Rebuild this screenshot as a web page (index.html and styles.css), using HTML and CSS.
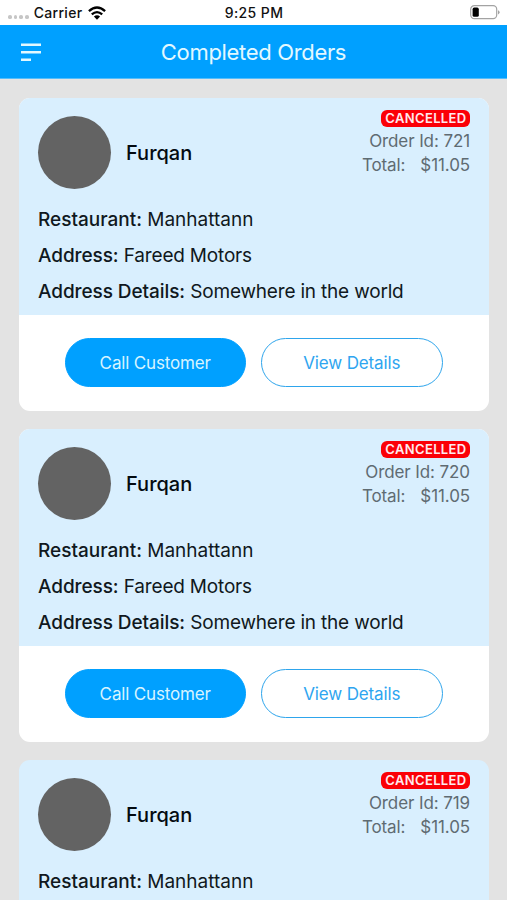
FILE: index.html
```html
<!DOCTYPE html>
<html lang="en">
<head>
<meta charset="utf-8">
<title>Completed Orders</title>
<link rel="stylesheet" href="styles.css">
</head>
<body>
<div class="status-bar">
  <div class="status-left">
    <span class="signal"><i></i><i></i><i></i><i></i></span>
    <span class="carrier">Carrier</span>
    <svg class="wifi" width="18" height="14" viewBox="0 0 18 14"><g fill="none" stroke="#000" stroke-width="2.3"><path d="M.9 5.1Q9-2.2 17.1 5.1"/><path d="M3.8 8.4Q9 3.8 14.2 8.4"/></g><path d="M5.9 10.5Q9 7.9 12.1 10.5L9 13.8Z"/></svg>
  </div>
  <span class="time">9:25 PM</span>
  <svg class="battery" width="30" height="15" viewBox="0 0 30 15"><rect x=".7" y=".7" width="26" height="13" rx="3.6" fill="#fff" stroke="#a3a3a3" stroke-width="1.2"/><rect x="2.6" y="2.6" width="6.2" height="9.2" rx="1.6"/><path d="M28 5.2q1.6.7 1.6 2.1t-1.6 2.1z" fill="#a3a3a3"/></svg>
</div>
<header class="nav">
  <svg class="menu" width="20" height="19" viewBox="0 0 20 19"><path d="M0 1.7h20M0 9.2h20M0 16.7h10" stroke="#e2f8ff" stroke-width="2.6"/></svg>
  <h1>Completed Orders</h1>
</header>
<main class="orders">
  <article class="card">
    <div class="info">
      <div class="summary">
        <div class="avatar"></div>
        <h2>Furqan</h2>
        <div class="meta"><span class="badge">CANCELLED</span><span class="id">Order Id: 721</span><span class="total"><span>Total:</span><span>$11.05</span></span></div>
      </div>
      <p class="row"><b>Restaurant:</b> <span>Manhattann</span></p>
      <p class="row tight"><b>Address:</b> <span>Fareed Motors</span></p>
      <p class="row tight"><b>Address Details:</b> <span>Somewhere in the world</span></p>
    </div>
    <div class="actions"><button class="btn primary">Call Customer</button><button class="btn outline">View Details</button></div>
  </article>
  <article class="card">
    <div class="info">
      <div class="summary">
        <div class="avatar"></div>
        <h2>Furqan</h2>
        <div class="meta"><span class="badge">CANCELLED</span><span class="id">Order Id: 720</span><span class="total"><span>Total:</span><span>$11.05</span></span></div>
      </div>
      <p class="row"><b>Restaurant:</b> <span>Manhattann</span></p>
      <p class="row tight"><b>Address:</b> <span>Fareed Motors</span></p>
      <p class="row tight"><b>Address Details:</b> <span>Somewhere in the world</span></p>
    </div>
    <div class="actions"><button class="btn primary">Call Customer</button><button class="btn outline">View Details</button></div>
  </article>
  <article class="card partial">
    <div class="info">
      <div class="summary">
        <div class="avatar"></div>
        <h2>Furqan</h2>
        <div class="meta"><span class="badge">CANCELLED</span><span class="id">Order Id: 719</span><span class="total"><span>Total:</span><span>$11.05</span></span></div>
      </div>
      <p class="row"><b>Restaurant:</b> <span>Manhattann</span></p>
    </div>
  </article>
</main>
</body>
</html>
```
FILE: styles.css
```css
* { box-sizing: border-box; }
html, body { height: 100%; }
body {
  margin: 0;
  overflow: hidden;
  display: flex;
  flex-direction: column;
  background: #e3e3e3;
  color: #101820;
  font-family: Inter, sans-serif;
}
h1, h2, p { margin: 0; }
.status-bar {
  flex: none;
  display: grid;
  grid-template-columns: 1fr auto 1fr;
  align-items: center;
  height: 25px;
  padding: 0 7px 0 8px;
  background: #fff;
  color: #111;
  font-size: 14px;
  font-weight: 500;
}
.status-left { display: flex; align-items: center; }
.signal { display: flex; gap: 2px; margin: 9px 5px 0 0; }
.signal i { width: 3.7px; height: 3.7px; border-radius: 50%; background: #c6c6c6; }
.carrier { letter-spacing: .3px; }
.wifi { margin-left: 6px; }
.time { letter-spacing: .4px; }
.battery { justify-self: end; }
.nav {
  flex: none;
  display: grid;
  grid-template-columns: 20px 1fr 20px;
  align-items: center;
  height: 54px;
  padding: 0 21px;
  background: #00a0ff;
  color: #e2f8ff;
  border-bottom: 1px solid #55bdfb;
}
.menu { margin-top: 1px; }
.nav h1 { padding-top: 1px; text-align: center; font-size: 22px; font-weight: 400; letter-spacing: -.33px; }
.orders {
  flex: 1;
  min-height: 0;
  display: flex;
  flex-direction: column;
  gap: 18px;
  padding: 18.5px 18px 0 19px;
}
.card {
  flex: none;
  height: 313px;
  border-radius: 11px;
  overflow: hidden;
  background: #fff;
}
.partial { flex: 1; height: auto; min-height: 0; border-radius: 11px 11px 0 0; }
.info { height: 217px; padding: 18px 19px 0; background: #d9effe; }
.partial .info { height: 100%; }
.summary { display: flex; height: 86px; }
.avatar { width: 73px; height: 73px; border-radius: 50%; background: #636363; }
.summary h2 { height: 73px; margin-left: 15px; color: #030a10; line-height: 74px; font-size: 20px; font-weight: 500; }
.meta {
  display: flex;
  flex-direction: column;
  align-items: flex-end;
  margin: -6px 0 0 auto;
  color: #5f6b72;
  font-size: 17px;
  line-height: 24.5px;
  letter-spacing: -.1px;
}
.badge {
  height: 17px;
  padding: 0 3.5px 0 4.5px;
  margin-bottom: 2px;
  border-radius: 6px;
  background: #fb0007;
  color: #ffe9ee;
  font-size: 13px;
  font-weight: 600;
  line-height: 17px;
  letter-spacing: .35px;
}
.total { display: flex; gap: 15px; }
.row { height: 36px; line-height: 36px; font-size: 19px; white-space: nowrap; }
.row b { font-weight: 500; }
.tight { letter-spacing: -.08px; }
.tight span { letter-spacing: -.19px; }
.actions { display: flex; justify-content: center; gap: 15px; padding: 23px 1px 0 0; }
.btn {
  width: 181.5px;
  height: 49px;
  padding: 1px 0 0;
  border: 1.5px solid #2ea5ec;
  border-radius: 25px;
  background: #fff;
  color: #2ea5f0;
  font: 400 17px Inter, sans-serif;
  letter-spacing: -.15px;
}
.primary { border-color: #00a0ff; background: #00a0ff; color: #d7f4ff; }
```
